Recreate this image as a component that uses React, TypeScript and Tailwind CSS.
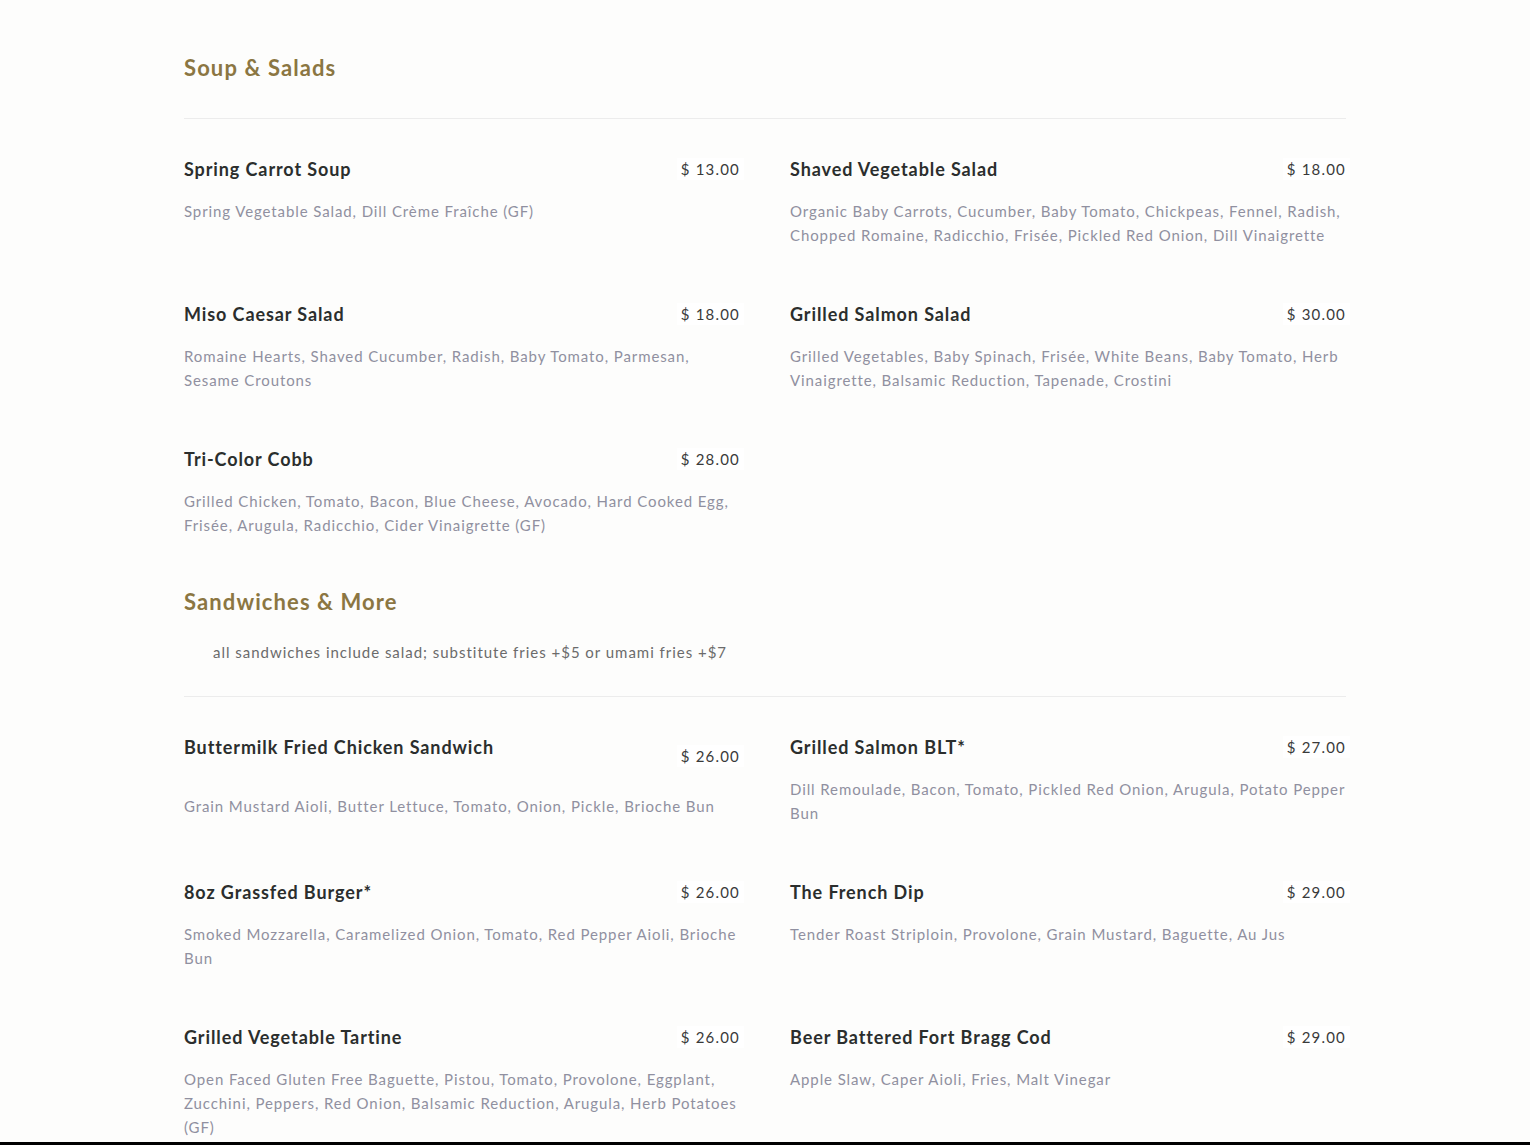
const soups = [
  { name: "Spring Carrot Soup", price: "13.00", desc: "Spring Vegetable Salad, Dill Crème Fraîche (GF)" },
  {
    name: "Shaved Vegetable Salad",
    price: "18.00",
    desc: "Organic Baby Carrots, Cucumber, Baby Tomato, Chickpeas, Fennel, Radish, Chopped Romaine, Radicchio, Frisée, Pickled Red Onion, Dill Vinaigrette",
  },
  {
    name: "Miso Caesar Salad",
    price: "18.00",
    desc: "Romaine Hearts, Shaved Cucumber, Radish, Baby Tomato, Parmesan, Sesame Croutons",
  },
  {
    name: "Grilled Salmon Salad",
    price: "30.00",
    desc: "Grilled Vegetables, Baby Spinach, Frisée, White Beans, Baby Tomato, Herb Vinaigrette, Balsamic Reduction, Tapenade, Crostini",
  },
  {
    name: "Tri-Color Cobb",
    price: "28.00",
    desc: "Grilled Chicken, Tomato, Bacon, Blue Cheese, Avocado, Hard Cooked Egg, Frisée, Arugula, Radicchio, Cider Vinaigrette (GF)",
  },
];

const sandwiches = [
  {
    name: "Buttermilk Fried Chicken Sandwich",
    price: "26.00",
    desc: "Grain Mustard Aioli, Butter Lettuce, Tomato, Onion, Pickle, Brioche Bun",
    tall: true,
  },
  {
    name: "Grilled Salmon BLT*",
    price: "27.00",
    desc: "Dill Remoulade, Bacon, Tomato, Pickled Red Onion, Arugula, Potato Pepper Bun",
  },
  {
    name: "8oz Grassfed Burger*",
    price: "26.00",
    desc: "Smoked Mozzarella, Caramelized Onion, Tomato, Red Pepper Aioli, Brioche Bun",
  },
  {
    name: "The French Dip",
    price: "29.00",
    desc: "Tender Roast Striploin, Provolone, Grain Mustard, Baguette, Au Jus",
  },
  {
    name: "Grilled Vegetable Tartine",
    price: "26.00",
    desc: "Open Faced Gluten Free Baguette, Pistou, Tomato, Provolone, Eggplant, Zucchini, Peppers, Red Onion, Balsamic Reduction, Arugula, Herb Potatoes (GF)",
  },
  {
    name: "Beer Battered Fort Bragg Cod",
    price: "29.00",
    desc: "Apple Slaw, Caper Aioli, Fries, Malt Vinegar",
  },
];

type Item = { name: string; price: string; desc: string; tall?: boolean };

function MenuItem({ item }: { item: Item }) {
  return (
    <div className="flex flex-col">
      <div
        className={
          item.tall
            ? "flex justify-between items-center h-[43px]"
            : "flex justify-between items-center h-[26px]"
        }
      >
        <h3
          className={
            item.tall
              ? "self-start text-[18px] leading-[26px] font-bold tracking-[0.05em] text-[#2b2e2d]"
              : "text-[18px] leading-[26px] font-bold tracking-[0.05em] text-[#2b2e2d]"
          }
        >
          {item.name}
        </h3>
        <span className="bg-white px-1 -mr-1 text-[15px] leading-[22px] tracking-[0.08em] text-[#3a3a3a]">
          $ {item.price}
        </span>
      </div>
      <p className="mt-[17px] text-[15px] leading-[24px] tracking-[0.06em] text-[#9090a0]">
        {item.desc}
      </p>
    </div>
  );
}

function Section({
  title,
  note,
  items,
}: {
  title: string;
  note?: string;
  items: Item[];
}) {
  return (
    <section className="flex flex-col">
      <h2 className="text-[22px] leading-[28px] font-bold tracking-[0.05em] text-[#8b7642]">
        {title}
      </h2>
      {note ? (
        <p className="mt-[24px] pl-[29px] text-[15px] leading-[24px] tracking-[0.065em] text-[#6b6b6b]">
          {note}
        </p>
      ) : null}
      <div
        className={
          note
            ? "mt-[32px] border-t border-[#ececec]"
            : "mt-[36px] border-t border-[#ececec]"
        }
      />
      <div className="grid grid-cols-2 gap-x-[50px] gap-y-[54px] pt-[37px]">
        {items.map((item, i) => (
          <MenuItem key={i} item={item} />
        ))}
      </div>
    </section>
  );
}

export default function App() {
  return (
    <div
      className="h-[1145px] overflow-hidden bg-[#fdfdfc] border-b-[3px] border-black"
      style={{ fontFamily: "Lato, 'Open Sans', sans-serif" }}
    >
      <div className="w-[1162px] ml-[184px] pt-[54px] flex flex-col gap-[51px]">
        <Section title="Soup & Salads" items={soups} />
        <Section
          title="Sandwiches & More"
          note="all sandwiches include salad; substitute fries +$5 or umami fries +$7"
          items={sandwiches}
        />
      </div>
    </div>
  );
}
